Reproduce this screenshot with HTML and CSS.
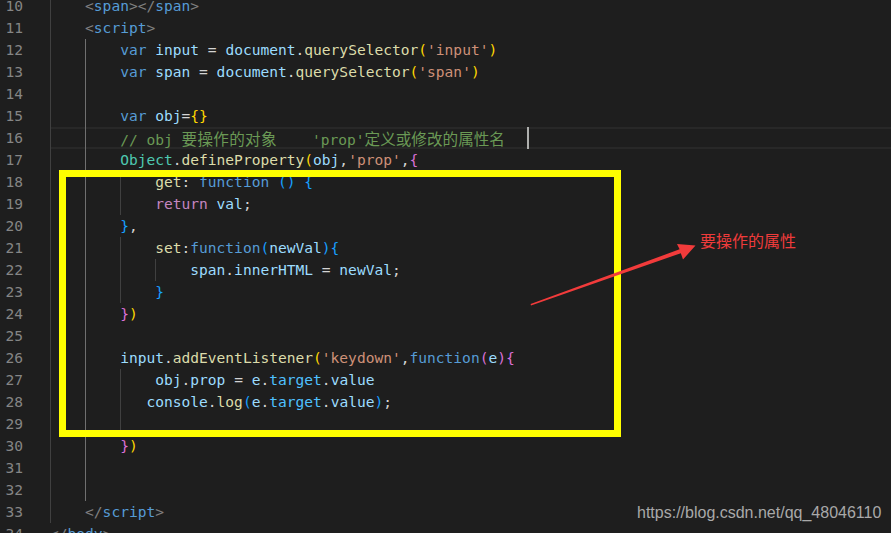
FILE: index.html
```html
<!DOCTYPE html>
<html lang="zh-CN">
<head>
    <meta charset="UTF-8">
    <meta name="viewport" content="width=device-width, initial-scale=1.0">
    <title>defineProperty</title>
    <link rel="stylesheet" href="styles.css">
</head>
<body>
    <div class="stage">
        <div class="editor">
            <div class="line"><span class="ln">10</span><span class="code"><span class="ig"></span><span class="g">&lt;</span><span class="k">span</span><span class="g">&gt;&lt;/</span><span class="k">span</span><span class="g">&gt;</span></span></div>
            <div class="line"><span class="ln">11</span><span class="code"><span class="ig"></span><span class="g">&lt;</span><span class="k">script</span><span class="g">&gt;</span></span></div>
            <div class="line"><span class="ln">12</span><span class="code"><span class="ig"></span><span class="ig act"></span><span class="k">var</span> <span class="v">input</span> = <span class="v">document</span>.<span class="f">querySelector</span><span class="b1">(</span><span class="s">'input'</span><span class="b1">)</span></span></div>
            <div class="line"><span class="ln">13</span><span class="code"><span class="ig"></span><span class="ig act"></span><span class="k">var</span> <span class="v">span</span> = <span class="v">document</span>.<span class="f">querySelector</span><span class="b1">(</span><span class="s">'span'</span><span class="b1">)</span></span></div>
            <div class="line"><span class="ln">14</span><span class="code"><span class="ig"></span><span class="ig act"></span></span></div>
            <div class="line"><span class="ln">15</span><span class="code"><span class="ig"></span><span class="ig act"></span><span class="k">var</span> <span class="v">obj</span>=<span class="b1">{}</span></span></div>
            <div class="line current"><span class="ln">16</span><span class="code"><span class="ig"></span><span class="ig act"></span><span class="c">// obj <span class="cj wide">要操作的对象</span>    'prop'<span class="cj">定义或修改的属性名</span></span></span></div>
            <div class="line"><span class="ln">17</span><span class="code"><span class="ig"></span><span class="ig act"></span><span class="t">Object</span>.<span class="f">defineProperty</span><span class="b1">(</span><span class="v">obj</span>,<span class="s">'prop'</span>,<span class="b2">{</span></span></div>
            <div class="line"><span class="ln">18</span><span class="code"><span class="ig"></span><span class="ig act"></span><span class="ig"></span><span class="f">get</span>: <span class="k">function</span> <span class="b3">()</span> <span class="b3">{</span></span></div>
            <div class="line"><span class="ln">19</span><span class="code"><span class="ig"></span><span class="ig act"></span><span class="ig"></span><span class="r">return</span> <span class="v">val</span>;</span></div>
            <div class="line"><span class="ln">20</span><span class="code"><span class="ig"></span><span class="ig act"></span><span class="b3">}</span>,</span></div>
            <div class="line"><span class="ln">21</span><span class="code"><span class="ig"></span><span class="ig act"></span><span class="ig"></span><span class="f">set</span>:<span class="k">function</span><span class="b3">(</span><span class="v">newVal</span><span class="b3">){</span></span></div>
            <div class="line"><span class="ln">22</span><span class="code"><span class="ig"></span><span class="ig act"></span><span class="ig"></span><span class="ig"></span><span class="v">span</span>.<span class="v">innerHTML</span> = <span class="v">newVal</span>;</span></div>
            <div class="line"><span class="ln">23</span><span class="code"><span class="ig"></span><span class="ig act"></span><span class="ig"></span><span class="b3">}</span></span></div>
            <div class="line"><span class="ln">24</span><span class="code"><span class="ig"></span><span class="ig act"></span><span class="b2">}</span><span class="b1">)</span></span></div>
            <div class="line"><span class="ln">25</span><span class="code"><span class="ig"></span><span class="ig act"></span></span></div>
            <div class="line"><span class="ln">26</span><span class="code"><span class="ig"></span><span class="ig act"></span><span class="v">input</span>.<span class="f">addEventListener</span><span class="b1">(</span><span class="s">'keydown'</span>,<span class="k">function</span><span class="b2">(</span><span class="v">e</span><span class="b2">){</span></span></div>
            <div class="line"><span class="ln">27</span><span class="code"><span class="ig"></span><span class="ig act"></span><span class="ig"></span><span class="v">obj</span>.<span class="v">prop</span> = <span class="v">e</span>.<span class="pr">target</span>.<span class="v">value</span></span></div>
            <div class="line"><span class="ln">28</span><span class="code"><span class="ig"></span><span class="ig act"></span><span class="ig short"></span><span class="v">console</span>.<span class="f">log</span><span class="b3">(</span><span class="v">e</span>.<span class="pr">target</span>.<span class="v">value</span><span class="b3">)</span>;</span></div>
            <div class="line"><span class="ln">29</span><span class="code"><span class="ig"></span><span class="ig act"></span><span class="ig"></span></span></div>
            <div class="line"><span class="ln">30</span><span class="code"><span class="ig"></span><span class="ig act"></span><span class="b2">}</span><span class="b1">)</span></span></div>
            <div class="line"><span class="ln">31</span><span class="code"><span class="ig"></span><span class="ig act"></span></span></div>
            <div class="line"><span class="ln">32</span><span class="code"><span class="ig"></span><span class="ig act"></span></span></div>
            <div class="line"><span class="ln">33</span><span class="code"><span class="ig"></span><span class="g">&lt;/</span><span class="k">script</span><span class="g">&gt;</span></span></div>
            <div class="line"><span class="ln">34</span><span class="code"><span class="g">&lt;/</span><span class="k">body</span><span class="g">&gt;</span></span></div>
        </div>

        <div class="cursor"></div>
        <div class="highlight-box"></div>

        <svg class="arrow" width="891" height="533" viewBox="0 0 891 533">
            <polygon points="531,305.5 680.8,253.2 683,259.5 695.5,245.5 677,244 679.6,249.3 530.6,304" fill="#f23b3b"/>
        </svg>
        <div class="note">要操作的属性</div>

        <div class="watermark">https://blog.csdn.net/qq_48046110</div>
    </div>
</body>
</html>
```

FILE: styles.css
```css
html, body {
    margin: 0;
    padding: 0;
}

body {
    background: #1e1e1e;
    overflow: hidden;
    height: 533px;
}

.stage {
    position: relative;
    width: 891px;
    height: 533px;
    overflow: hidden;
}

.editor {
    margin-top: -5px;
    font-family: "DejaVu Sans Mono", "Noto Sans CJK SC", monospace;
    font-size: 14.57px;
    color: #d4d4d4;
}

.line {
    display: flex;
    height: 22px;
    line-height: 22px;
}

.ln {
    width: 50px;
    flex: none;
    box-sizing: border-box;
    padding-right: 27px;
    text-align: right;
    color: #858585;
}

.code {
    flex: 1;
    white-space: pre;
}

.current .code {
    box-shadow: inset 0 2px #282828, inset 0 -2px #282828;
}

/* indent guides */
.ig {
    display: inline-block;
    width: 4ch;
    height: 22px;
    vertical-align: top;
    box-sizing: border-box;
    border-left: 1px solid #404040;
}

.ig.act {
    border-left-color: #707070;
}

.ig.short {
    width: 3ch;
}

/* tokens */
.g { color: #808080; }
.k { color: #569cd6; }
.v { color: #9cdcfe; }
.pr { color: #4fc1ff; }
.f { color: #dcdcaa; }
.s { color: #ce9178; }
.c { color: #6a9955; }
.t { color: #4ec9b0; }
.r { color: #c586c0; }
.b1 { color: #ffd700; }
.b2 { color: #da70d6; }
.b3 { color: #179fff; }

.cj {
    font-family: "Noto Sans CJK SC", sans-serif;
    font-size: 15.6px;
}

.cj.wide {
    letter-spacing: 0.3px;
}

.cursor {
    position: absolute;
    left: 527px;
    top: 127px;
    width: 2px;
    height: 22px;
    background: #aeafad;
}

.highlight-box {
    position: absolute;
    left: 59px;
    top: 170px;
    width: 562px;
    height: 267px;
    box-sizing: border-box;
    border: 7px solid #ffff00;
}

.arrow {
    position: absolute;
    left: 0;
    top: 0;
}

.note {
    position: absolute;
    left: 700px;
    top: 229px;
    line-height: 22px;
    font-family: "Noto Sans CJK SC", sans-serif;
    font-size: 16px;
    color: #ee3b3b;
}

.watermark {
    position: absolute;
    left: 637px;
    top: 503px;
    line-height: 20px;
    font-family: "Liberation Sans", Arial, sans-serif;
    font-size: 16px;
    color: #a9a9a9;
}
```
